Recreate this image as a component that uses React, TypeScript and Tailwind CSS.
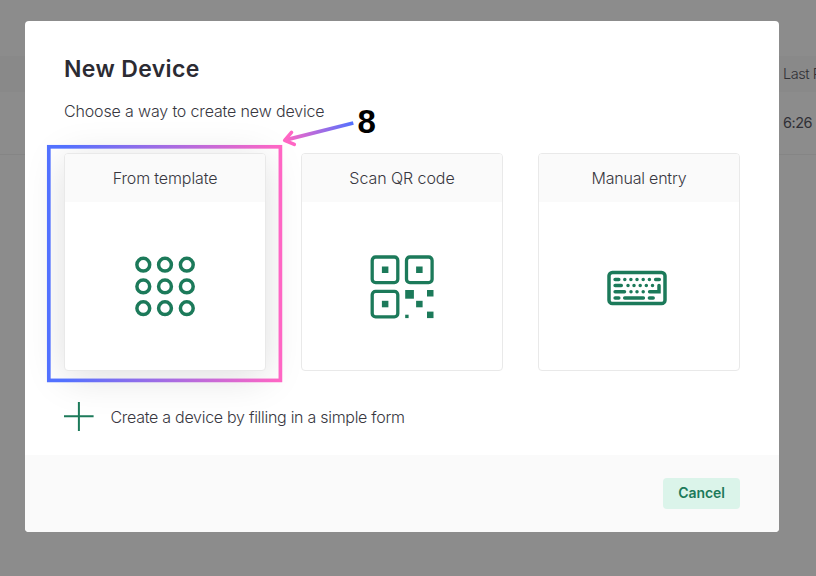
import type { ReactNode } from "react";

const text = "font-['Inter','Liberation_Sans',sans-serif]";

function DotsIcon() {
  const at = [8.5, 30.2, 52];
  return (
    <svg width="60" height="62" viewBox="0 0 60 62" className="mt-[54px]" fill="none" stroke="#1c7a5a" strokeWidth="3.5">
      {at.map((y) => at.map((x) => <circle key={`${x}-${y}`} cx={x - 0.2} cy={y + 0.2} r="6.4" />))}
    </svg>
  );
}

function QrIcon() {
  return (
    <svg width="64" height="64" viewBox="0 0 64 64" className="mt-[53px]" fill="#1c7a5a">
      <g fill="none" stroke="#1c7a5a" strokeWidth="3.3">
        <rect x="2.2" y="2" width="25.6" height="25.6" rx="3.4" />
        <rect x="36.5" y="2" width="25.6" height="25.6" rx="3.4" />
        <rect x="2.2" y="36.3" width="25.6" height="25.6" rx="3.4" />
      </g>
      <rect x="11.9" y="11.5" width="6.5" height="6.5" />
      <rect x="46.1" y="11.5" width="6.5" height="6.5" />
      <rect x="11.9" y="45.8" width="6.5" height="6.5" />
      <rect x="35.2" y="35" width="8.7" height="8.7" />
      <rect x="57" y="35" width="6.5" height="6.5" />
      <rect x="46.1" y="45.8" width="6.5" height="6.5" />
      <rect x="57" y="56.6" width="6.5" height="6.5" />
      <rect x="35.2" y="59.7" width="3.4" height="3.4" />
    </svg>
  );
}

function KeyboardIcon() {
  return (
    <svg width="60" height="36" viewBox="0 0 60 36" className="mt-[68px] mr-1" fill="none" stroke="#1c7a5a" strokeWidth="3.5" strokeLinecap="round">
      <rect x="2" y="2.4" width="56" height="31.2" rx="3.4" />
      <path d="M8.1 9.4H11.8M17.8 9.4h.01M23.9 9.4h.01M30 9.4h.01M36.2 9.4h.01M42.4 9.4h.01M48.6 9.4H52.3" />
      <path d="M8.1 15.6H14.3M21 15.6h.01M27 15.6h.01M33.2 15.6h.01M39.3 15.6h.01M45.5 15.6h.01" />
      <path d="M8.1 21.8H17.5M24 21.8h.01M30 21.8h.01M36.2 21.8h.01M42.6 21.8H52V15.4" strokeLinejoin="miter" />
      <path d="M8.1 28H11.8M17.7 28H36.4M42.4 28H46.2" />
    </svg>
  );
}

function Card({ title, active, spacing, children }: { title: string; active?: boolean; spacing: string; children: ReactNode }) {
  return (
    <div className={`flex h-[218px] w-[202px] flex-col items-center overflow-hidden rounded border border-[#e9e9e9] bg-white ${active ? "shadow-[0_6px_40px_rgba(0,0,0,0.13)]" : ""}`}>
      <div className={`flex h-12 w-full shrink-0 items-center justify-center bg-[#fafafa] text-base font-light text-[#38373f] ${spacing}`}>{title}</div>
      {children}
    </div>
  );
}

export default function App() {
  return (
    <div className={`relative h-[576px] w-[816px] overflow-hidden bg-[#8c8c8c] ${text}`}>
      <div className="pt-[56px] text-[14.5px] whitespace-nowrap text-[#303036]">
        <div className="flex h-9 items-center bg-[#898989] pl-[783px] font-light tracking-[-0.45px]">Last Reading</div>
        <div className="flex h-[63px] items-center border-b border-[#858585] pl-[783px] tracking-[-0.5px]">6:26 PM</div>
      </div>

      <div className="absolute top-[21px] left-[25px] flex h-[511px] w-[754px] flex-col overflow-hidden rounded bg-white">
        <div className="flex h-[434px] flex-col px-[39px] pt-8">
          <h1 className="text-[23px] leading-8 font-semibold tracking-[0.35px] text-[#2c2b33]">New Device</h1>
          <p className="mt-[14px] text-base leading-6 font-light tracking-[-0.15px] text-[#38373f]">Choose a way to create new device</p>
          <div className="mt-[30px] flex gap-[35px]">
            <Card title="From template" active spacing="tracking-[-0.12px]"><DotsIcon /></Card>
            <Card title="Scan QR code" spacing="tracking-[-0.06px]"><QrIcon /></Card>
            <Card title="Manual entry" spacing="tracking-[-0.22px]"><KeyboardIcon /></Card>
          </div>
          <div className="mt-[30px] flex items-center gap-[16.5px]">
            <svg width="30" height="30" viewBox="0 0 30 30" fill="none" stroke="#1c7a5a" strokeWidth="2">
              <path d="M0 15.3H29.6M14.9 1V30" />
            </svg>
            <span className="pt-0.5 text-base font-light tracking-[-0.28px] text-[#38373f]">Create a device by filling in a simple form</span>
          </div>
        </div>
        <div className="flex grow items-center justify-end bg-[#fafafa] pr-[39px]">
          <button className="h-[31px] w-[77px] rounded bg-[#dbf4ea] pb-px text-sm font-semibold tracking-[-0.1px] text-[#1c7a5a]">Cancel</button>
        </div>
      </div>

      <svg className="absolute inset-0" width="816" height="576" fill="none">
        <defs>
          <linearGradient id="frame" gradientUnits="userSpaceOnUse" x1="64" y1="0" x2="280" y2="0">
            <stop stopColor="#5271ff" />
            <stop offset="1" stopColor="#ff66c4" />
          </linearGradient>
          <linearGradient id="arrow" gradientUnits="userSpaceOnUse" x1="353" y1="123" x2="285" y2="140">
            <stop stopColor="#5271ff" />
            <stop offset="1" stopColor="#ff66c4" />
          </linearGradient>
        </defs>
        <rect x="48.8" y="146.8" width="231.6" height="233.6" stroke="url(#frame)" strokeWidth="3.7" />
        <path d="M353.3 123L285 140.2" stroke="url(#arrow)" strokeWidth="3.8" />
        <path d="M291.5 132.3L284.7 140.3L294.3 144.3" stroke="#ff66c4" strokeWidth="3.6" strokeLinecap="round" strokeLinejoin="round" />
      </svg>
      <div className="absolute top-[102px] left-[357.5px] font-['Liberation_Sans',sans-serif] text-[33px] leading-10 font-bold text-black">8</div>
    </div>
  );
}
